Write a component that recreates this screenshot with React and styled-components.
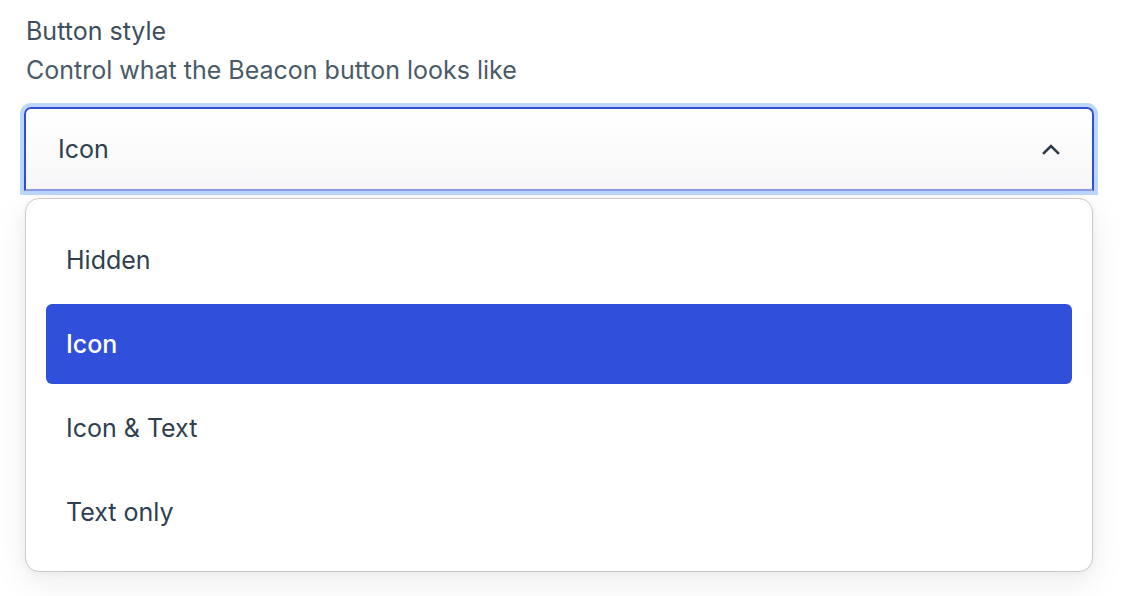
import React from "react";
import styled, { createGlobalStyle } from "styled-components";

const Global = createGlobalStyle`
  html, body { margin: 0; padding: 0; background: #ffffff; }
  body { font-family: Inter, "Noto Sans", sans-serif; -webkit-font-smoothing: antialiased; }
`;

const Page = styled.div`
  width: 1128px;
  height: 596px;
  box-sizing: border-box;
  padding: 14px 34px 0 24px;
  overflow: hidden;
`;

const Label = styled.div`
  font-size: 25px;
  line-height: 34px;
  color: #3e4e5e;
  padding-left: 2px;
`;

const Hint = styled.div`
  font-size: 25px;
  line-height: 34px;
  margin-top: 5px;
  color: #4a5a69;
  padding-left: 2px;
`;

const Field = styled.div`
  position: relative;
  margin-top: 20px;
`;

const Trigger = styled.div`
  height: 84px;
  box-sizing: border-box;
  display: flex;
  align-items: center;
  justify-content: space-between;
  padding: 0 32px 0 32px;
  border: 2px solid #2f4fdb;
  border-bottom-color: #8e9ae6;
  border-radius: 7px 7px 0 0;
  background: linear-gradient(#ffffff, #f7f7f9);
  box-shadow: 0 0 0 4px #bcd7fb;
  font-size: 25px;
  line-height: 34px;
  color: #2f3f50;
`;

const Chevron = styled.svg`
  width: 18px;
  height: 12px;
  display: block;
`;

const Menu = styled.ul`
  position: absolute;
  left: 1px;
  right: 1px;
  top: 91px;
  margin: 0;
  list-style: none;
  box-sizing: border-box;
  padding: 21px 20px 19px;
  background: #ffffff;
  border: 1px solid #c8cacd;
  border-radius: 14px;
  box-shadow: 0 10px 34px rgba(20, 30, 50, 0.08), 0 2px 8px rgba(20, 30, 50, 0.04);
  display: flex;
  flex-direction: column;
  gap: 4px;
`;

const Option = styled.li`
  height: 80px;
  display: flex;
  align-items: center;
  padding: 0 20px;
  border-radius: 6px;
  font-size: 25px;
  line-height: 34px;
  color: ${(p) => (p.$active ? "#ffffff" : "#2f3f50")};
  background: ${(p) => (p.$active ? "#304fdb" : "transparent")};
  font-weight: ${(p) => (p.$active ? 500 : 400)};
`;

const options = ["Hidden", "Icon", "Icon & Text", "Text only"];

export default function App() {
  return (
    <>
      <Global />
      <Page>
        <Label>Button style</Label>
        <Hint>Control what the Beacon button looks like</Hint>
        <Field>
          <Trigger>
            <span>Icon</span>
            <Chevron viewBox="0 0 18 12">
              <polyline
                points="2,10 9,3 16,10"
                fill="none"
                stroke="#2d3b48"
                strokeWidth="2.6"
                strokeLinecap="square"
              />
            </Chevron>
          </Trigger>
          <Menu>
            {options.map((o) => (
              <Option key={o} $active={o === "Icon"}>
                {o}
              </Option>
            ))}
          </Menu>
        </Field>
      </Page>
    </>
  );
}
